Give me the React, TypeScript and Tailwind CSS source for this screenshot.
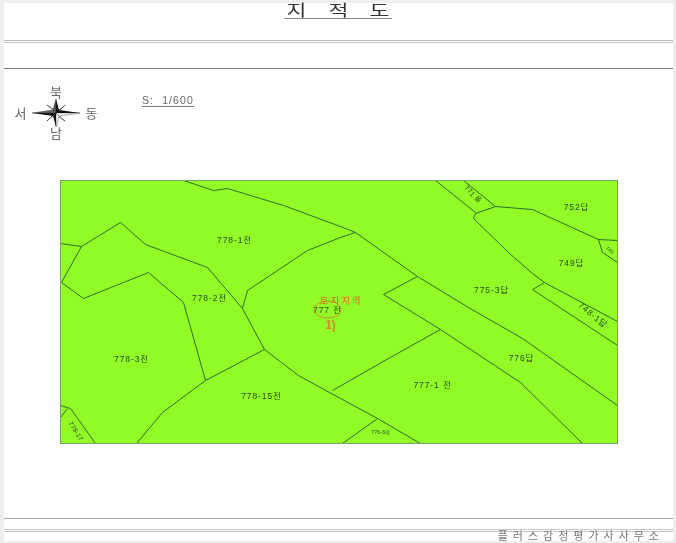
import React from "react";

const F = '"Liberation Sans","Noto Sans CJK KR",sans-serif';

const lines = [
  "183,180 213,190 227,188 283,205 340,226 355,232 417,276 468,307 522,338 617,405",
  "60,243 81,246 120,222 145,244 207,267 242,308 264,349 298,375 340,398 377,418 420,443",
  "81,246 61,282 83,298 148,272 183,302 205,380",
  "242,308 247,290 307,250 340,237 355,232",
  "264,349 205,380 162,412 136,443",
  "332,390 388,358 440,329",
  "417,276 383,294 440,329 520,382 582,443",
  "435,180 475,212",
  "463,180 495,206",
  "495,206 475,213 473,218 508,252 532,273 544,282 617,321",
  "495,206 532,209 598,239 617,240",
  "598,239 602,252 617,262",
  "544,282 532,289 617,345",
  "377,418 342,443",
  "60,405 70,408 95,443",
  "60,417 67,408",
];

const labels: [string, number, number, number?, number?][] = [
  ["778-1전", 234, 240],
  ["778-2전", 209, 298],
  ["778-3전", 131, 359],
  ["778-15전", 261, 396],
  ["777-1 전", 432, 385],
  ["776답", 521, 358],
  ["775-3답", 491, 290],
  ["749답", 571, 263],
  ["752답", 576, 207],
  ["771 을", 472, 194, 45, 7],
  ["748-1답", 592, 315, 40],
  ["776-3대", 380, 432, 0, 5],
  ["749", 609, 250, 38, 5],
  ["778-17", 75, 431, 58, 6.5],
  ["777 전", 327, 310],
];

function Compass() {
  return (
    <svg width="48" height="30" viewBox="-24 -15 48 30" className="blur-[0.4px]">
      <g stroke="#333" strokeWidth="0.6">
        <polygon points="0,0 9,-8 2,-1" fill="#333" />
        <polygon points="0,0 -9,-8 -1,-3" fill="#fff" />
        <polygon points="0,0 9,8 1,3" fill="#fff" />
        <polygon points="0,0 -9,8 -2,1" fill="#333" />
      </g>
      <polygon points="0,-14 3,-3 0,0" fill="#111" />
      <polygon points="0,-14 -3,-3 0,0" fill="#555" stroke="#222" strokeWidth="0.4" />
      <polygon points="0,14 -3,3 0,0" fill="#111" />
      <polygon points="0,14 3,3 0,0" fill="#fff" stroke="#222" strokeWidth="0.4" />
      <polygon points="-24,0 -3,-3 0,0" fill="#666" stroke="#222" strokeWidth="0.4" />
      <polygon points="-24,0 -3,3 0,0" fill="#111" />
      <polygon points="24,0 3,3 0,0" fill="#fff" stroke="#222" strokeWidth="0.4" />
      <polygon points="24,0 3,-3 0,0" fill="#111" />
    </svg>
  );
}

export default function App() {
  return (
    <div
      className="h-[543px] w-[676px] overflow-hidden bg-[#eeeeee] pt-[3px] pr-[3px] pb-[2px] pl-[4px]"
      style={{ fontFamily: F }}
    >
      <div className="flex h-full flex-col bg-white">
        <div className="flex h-[37px] justify-start pl-[280px]">
          <div className="flex h-[16px] w-[108px] justify-center gap-[27px] border-b border-[#8a8a8a] pt-[1px] text-[16px] leading-[14px] text-[#333] blur-[0.3px]">
            <span className="scale-x-[1.35]">지</span>
            <span className="scale-x-[1.35]">적</span>
            <span className="scale-x-[1.35]">도</span>
          </div>
        </div>
        <div className="h-[1px] bg-[#bdbdbd]" />
        <div className="h-[1px]" />
        <div className="h-[1px] bg-[#c4c4c4]" />
        <div className="h-[25px]" />
        <div className="h-[1px] bg-[#777777]" />

        <div className="flex h-[111px]">
          <div className="ml-[9px] mt-[17px] grid h-[53px] w-[96px] grid-cols-[15px_56px_15px] grid-rows-[12px_30px_11px] items-center justify-items-center text-[13px] leading-none text-[#666] blur-[0.4px]">
            <div />
            <div>북</div>
            <div />
            <div>서</div>
            <div className="flex h-[30px] items-center justify-center">
              <Compass />
            </div>
            <div>동</div>
            <div />
            <div>남</div>
            <div />
          </div>
          <div className="ml-[33px] mt-[26px] h-[12px] border-b border-[#777] text-[10.5px] leading-[11px] tracking-[1.1px] whitespace-pre text-[#666] blur-[0.3px]">
            S:  1/600
          </div>
        </div>

        <div className="ml-[56px] h-[264px] w-[558px] border border-[#7f9f6a] bg-[#92fa26]">
          <svg width="556" height="262" viewBox="60.5 180.5 556 262" className="block blur-[0.35px]">
            {lines.map((p) => (
              <polyline key={p} points={p} fill="none" stroke="#1f5f2c" strokeWidth="0.9" />
            ))}
            {labels.map(([t, x, y, r, s]) => (
              <text
                key={t}
                x={x}
                y={y}
                textAnchor="middle"
                dominantBaseline="middle"
                fontSize={s ?? 8.5}
                fill="#274a20"
                letterSpacing={s ? 0.2 : 0.9}
                transform={r ? `rotate(${r} ${x} ${y})` : undefined}
              >
                {t}
              </text>
            ))}
            <ellipse cx="327" cy="309" rx="13.5" ry="8.5" fill="none" stroke="#d9792a" strokeWidth="0.8" />
            <text x="341" y="301" textAnchor="middle" dominantBaseline="middle" fontSize="9" letterSpacing="2.5" fill="#d9632a">
              토지지역
            </text>
            <text x="330" y="325" textAnchor="middle" dominantBaseline="middle" fontSize="12" fontWeight="700" fill="#d9892a">
              1)
            </text>
          </svg>
        </div>

        <div className="h-[74px]" />
        <div className="h-[1px] bg-[#a8a8a8]" />
        <div className="h-[10px]" />
        <div className="h-[1px] bg-[#c8c8c8]" />
        <div className="h-[1px]" />
        <div className="h-[1px] bg-[#c8c8c8]" />
        <div className="flex flex-1 justify-end pr-[9px]">
          <div className="text-[11px] leading-[9px] tracking-[5px] whitespace-nowrap text-[#777] blur-[0.3px]">
            플러스감정평가사사무소
          </div>
        </div>
      </div>
    </div>
  );
}
